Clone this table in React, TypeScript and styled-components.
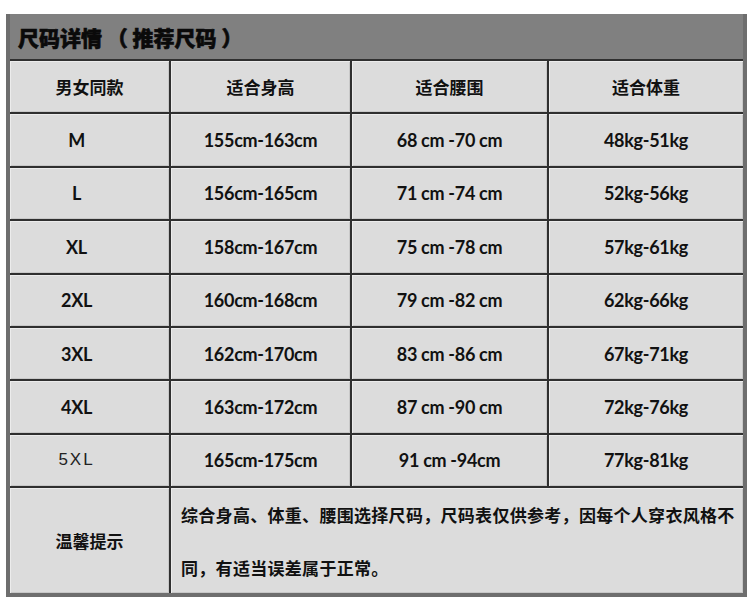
import * as React from 'react'
import styled, { createGlobalStyle } from 'styled-components'

const GlobalStyle = createGlobalStyle`
    html, body {
        margin: 0;
        padding: 0;
        background: #ffffff;
    }
    body {
        font-family: Lato, "Noto Sans CJK SC", sans-serif;
        color: #111111;
    }
`

const Page = styled.div`
    padding: 14px 0 0 6px;
`

const Frame = styled.div`
    width: 733px;
    border: 4px solid #6e6e6e;
    border-top: none;
    background: #2f2f2f;
`

const TitleBand = styled.div`
    height: 45px;
    background: #808080;
    border-bottom: 2px solid #2f2f2f;
    display: flex;
    align-items: center;
    padding-left: 8px;
    font-family: "Noto Sans CJK SC", sans-serif;
    font-size: 21px;
    font-weight: 900;
    -webkit-text-stroke: 0.6px #0a0a0a;
    color: #0a0a0a;
    white-space: pre;
`

const Grid = styled.div`
    display: grid;
    grid-template-columns: 159px 179px 195px 1fr;
    grid-auto-rows: 51.4px;
    gap: 2px;
`

const Cell = styled.div<{ $thin?: boolean; $cjk?: boolean; $tall?: boolean; $lead?: boolean }>`
    background: #dcdcdc;
    box-shadow: inset 1px 1px 0 #ececec, inset -1px -1px 0 #c8c8c8;
    display: flex;
    align-items: center;
    justify-content: center;
    padding-right: ${ (p) => p.$lead ? '26px' : '0' };
    grid-row: ${ (p) => p.$tall ? 'span 2' : 'auto' };
    font-family: ${ (p) => p.$thin ? '"Liberation Sans", sans-serif' : p.$cjk ? '"Noto Sans CJK SC", sans-serif' : 'Lato, "Noto Sans CJK SC", sans-serif' };
    font-size: ${ (p) => p.$thin ? '17px' : p.$cjk ? '17px' : '18px' };
    font-weight: ${ (p) => p.$thin ? 400 : 700 };
    letter-spacing: ${ (p) => p.$thin ? '2px' : p.$cjk ? '0' : '-0.3px' };
    color: ${ (p) => p.$thin ? '#222222' : '#111111' };
`

const NoteCell = styled.div`
    grid-column: span 3;
    grid-row: span 2;
    background: #dcdcdc;
    box-shadow: inset 1px 1px 0 #ececec, inset -1px -1px 0 #c8c8c8;
    display: flex;
    align-items: center;
    padding-left: 10px;
    font-family: "Noto Sans CJK SC", sans-serif;
    font-size: 17px;
    font-weight: 700;
    letter-spacing: 0.3px;
    line-height: 53px;
    color: #111111;
`

const headers = ['男女同款', '适合身高', '适合腰围', '适合体重']

const rows = [
    ['M', '155cm-163cm', '68 cm -70 cm', '48kg-51kg'],
    ['L', '156cm-165cm', '71 cm -74 cm', '52kg-56kg'],
    ['XL', '158cm-167cm', '75 cm -78 cm', '57kg-61kg'],
    ['2XL', '160cm-168cm', '79 cm -82 cm', '62kg-66kg'],
    ['3XL', '162cm-170cm', '83 cm -86 cm', '67kg-71kg'],
    ['4XL', '163cm-172cm', '87 cm -90 cm', '72kg-76kg'],
    ['5XL', '165cm-175cm', '91 cm -94cm', '77kg-81kg'],
]

export default function App() {
    return (
        <Page>
            <GlobalStyle />
            <Frame>
                <TitleBand>尺码详情 （ 推荐尺码 ）</TitleBand>
                <Grid>
                    {headers.map((h) => <Cell key={h} $cjk>{h}</Cell>)}
                    {rows.map((r) => r.map((v, i) => (
                        <Cell key={r[0] + i} $lead={i === 0} $thin={v === '5XL'}>{v}</Cell>
                    )))}
                    <Cell $cjk $tall>温馨提示</Cell>
                    <NoteCell>
                        <div>综合身高、体重、腰围选择尺码，尺码表仅供参考，因每个人穿衣风格不同，有适当误差属于正常。</div>
                    </NoteCell>
                </Grid>
            </Frame>
        </Page>
    )
}
